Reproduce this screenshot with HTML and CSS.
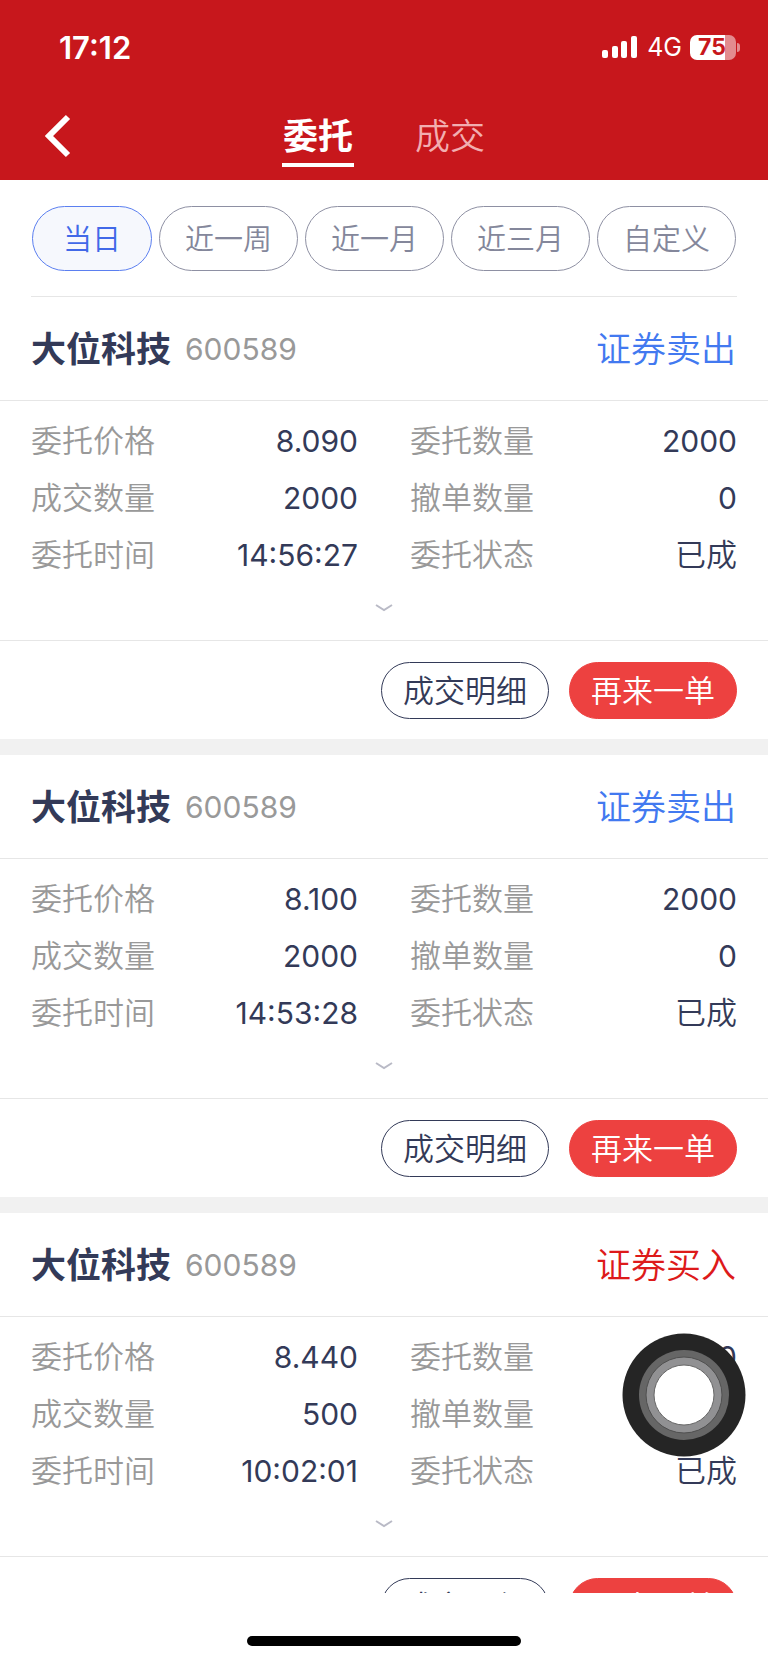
FILE: index.html
```html
<!DOCTYPE html>
<html lang="zh-CN">
<head>
  <meta charset="UTF-8">
  <meta name="viewport" content="width=device-width, initial-scale=1.0">
  <title>委托</title>
  <link rel="stylesheet" href="styles.css">
</head>
<body>
  <header class="header">
    <div class="status-bar">
      <span class="time">17:12</span>
      <div class="status-icons">
        <svg class="signal" width="36" height="22" viewBox="0 0 36 22" fill="#fff">
          <rect x="0" y="14" width="6" height="8" rx="2"/>
          <rect x="10" y="10" width="6" height="12" rx="2"/>
          <rect x="19" y="5" width="6" height="17" rx="2"/>
          <rect x="29" y="0" width="6" height="22" rx="2"/>
        </svg>
        <span class="network">4G</span>
        <div class="battery"><span class="battery-level">75</span></div>
      </div>
    </div>
    <nav class="nav">
      <button class="back" aria-label="返回">
        <svg width="26" height="44" viewBox="0 0 26 44" fill="none" stroke="#fff" stroke-width="6">
          <path d="M23 3 L4 22 L23 41"/>
        </svg>
      </button>
      <div class="tabs">
        <a class="tab active" href="#orders">委托</a>
        <a class="tab" href="#deals">成交</a>
      </div>
    </nav>
  </header>

  <div class="filters">
    <button class="filter active">当日</button>
    <button class="filter">近一周</button>
    <button class="filter">近一月</button>
    <button class="filter">近三月</button>
    <button class="filter">自定义</button>
  </div>

  <main class="orders" id="orders">
    <article class="order">
      <div class="order-head">
        <h2 class="name">大位科技</h2>
        <span class="code">600589</span>
        <span class="side sell">证券卖出</span>
      </div>
      <div class="order-body">
        <dl class="details">
          <div class="item"><dt>委托价格</dt><dd>8.090</dd></div>
          <div class="item"><dt>委托数量</dt><dd>2000</dd></div>
          <div class="item"><dt>成交数量</dt><dd>2000</dd></div>
          <div class="item"><dt>撤单数量</dt><dd>0</dd></div>
          <div class="item"><dt>委托时间</dt><dd>14:56:27</dd></div>
          <div class="item"><dt>委托状态</dt><dd class="state">已成</dd></div>
        </dl>
        <button class="expand" aria-label="展开">
          <svg width="18" height="8" viewBox="0 0 18 8" fill="none" stroke="#b9bac6" stroke-width="2"><path d="M1 1 L9 6 L17 1"/></svg>
        </button>
      </div>
      <div class="order-actions">
        <button class="btn">成交明细</button>
        <button class="btn btn-primary">再来一单</button>
      </div>
    </article>

    <article class="order">
      <div class="order-head">
        <h2 class="name">大位科技</h2>
        <span class="code">600589</span>
        <span class="side sell">证券卖出</span>
      </div>
      <div class="order-body">
        <dl class="details">
          <div class="item"><dt>委托价格</dt><dd>8.100</dd></div>
          <div class="item"><dt>委托数量</dt><dd>2000</dd></div>
          <div class="item"><dt>成交数量</dt><dd>2000</dd></div>
          <div class="item"><dt>撤单数量</dt><dd>0</dd></div>
          <div class="item"><dt>委托时间</dt><dd>14:53:28</dd></div>
          <div class="item"><dt>委托状态</dt><dd class="state">已成</dd></div>
        </dl>
        <button class="expand" aria-label="展开">
          <svg width="18" height="8" viewBox="0 0 18 8" fill="none" stroke="#b9bac6" stroke-width="2"><path d="M1 1 L9 6 L17 1"/></svg>
        </button>
      </div>
      <div class="order-actions">
        <button class="btn">成交明细</button>
        <button class="btn btn-primary">再来一单</button>
      </div>
    </article>

    <article class="order">
      <div class="order-head">
        <h2 class="name">大位科技</h2>
        <span class="code">600589</span>
        <span class="side buy">证券买入</span>
      </div>
      <div class="order-body">
        <dl class="details">
          <div class="item"><dt>委托价格</dt><dd>8.440</dd></div>
          <div class="item"><dt>委托数量</dt><dd>500</dd></div>
          <div class="item"><dt>成交数量</dt><dd>500</dd></div>
          <div class="item"><dt>撤单数量</dt><dd>0</dd></div>
          <div class="item"><dt>委托时间</dt><dd>10:02:01</dd></div>
          <div class="item"><dt>委托状态</dt><dd class="state">已成</dd></div>
        </dl>
        <button class="expand" aria-label="展开">
          <svg width="18" height="8" viewBox="0 0 18 8" fill="none" stroke="#b9bac6" stroke-width="2"><path d="M1 1 L9 6 L17 1"/></svg>
        </button>
      </div>
      <div class="order-actions">
        <button class="btn">成交明细</button>
        <button class="btn btn-primary">再来一单</button>
      </div>
    </article>
  </main>

  <footer class="home-bar">
    <div class="home-indicator"></div>
  </footer>

  <button class="assistive-touch" aria-label="辅助触控">
    <svg width="124" height="124" viewBox="0 0 124 124">
      <circle cx="62" cy="62" r="61.5" fill="#252525"/>
      <circle cx="62" cy="62" r="45" fill="#666"/>
      <circle cx="62" cy="62" r="38" fill="#919193" stroke="#505050" stroke-width="1"/>
      <circle cx="62" cy="62" r="30" fill="#fff" stroke="#666" stroke-width="1"/>
    </svg>
  </button>
</body>
</html>
```
FILE: styles.css
```css
* {
  box-sizing: border-box;
}
body {
  margin: 0;
  height: 100vh;
  display: flex;
  flex-direction: column;
  background: #fff;
  color: #333a58;
  font-family: Inter, "Noto Sans CJK SC", sans-serif;
  font-size: 31px;
}
button {
  margin: 0;
  padding: 0;
  border: none;
  background: none;
  color: inherit;
  font: inherit;
  cursor: pointer;
}
svg {
  display: block;
}

/* header */
.header {
  flex: none;
  background: #c7171c;
  color: #fff;
}
.status-bar {
  height: 94px;
  padding: 0 30px 0 59px;
  display: flex;
  align-items: center;
  justify-content: space-between;
}
.time {
  font-size: 31px;
  font-weight: 600;
}
.status-icons {
  display: flex;
  align-items: center;
}
.network {
  margin: 0 8px 0 9px;
  font-size: 25px;
}
.battery {
  position: relative;
  width: 46px;
  height: 25px;
  margin-right: 2px;
  padding-right: 2px;
  display: flex;
  align-items: center;
  justify-content: center;
  border-radius: 7px;
  background: linear-gradient(to right, #fff 35px, #e38b8e 35px);
}
.battery::after {
  content: "";
  position: absolute;
  top: 8px;
  right: -4px;
  width: 3px;
  height: 9px;
  border-radius: 0 3px 3px 0;
  background: #e38b8e;
}
.battery-level {
  color: #c7171c;
  font-size: 23px;
  font-weight: 700;
  line-height: 25px;
}
.nav {
  height: 86px;
  padding: 0 45px;
  display: grid;
  grid-template-columns: 1fr auto 1fr;
}
.back {
  justify-self: start;
  align-self: center;
  padding-bottom: 3px;
}
.tabs {
  display: flex;
  gap: 60px;
}
.tab {
  height: 73px;
  padding: 0 1px;
  border-bottom: 4px solid transparent;
  color: #f2aeb0;
  font-size: 35px;
  font-weight: 350;
  line-height: 84px;
  text-decoration: none;
}
.tab.active {
  border-color: #fff;
  color: #fff;
  font-weight: 600;
}

/* date filters */
.filters {
  flex: none;
  display: flex;
  justify-content: space-between;
  margin: 0 31px;
  padding: 26px 1px 25px;
  border-bottom: 1px solid #e6e6e6;
}
.filter {
  min-width: 120px;
  height: 65px;
  padding: 0 25px 4px;
  border: 1px solid #8e90a3;
  border-radius: 33px;
  color: #84879b;
  font-size: 29px;
  font-weight: 350;
}
.filter.active {
  border-color: #5b7ff0;
  background: #f6f8fd;
  color: #4169e8;
}

/* orders */
.orders {
  flex: 1;
  min-height: 0;
  overflow: hidden;
}
.order {
  border-bottom: 16px solid #f1f1f1;
}
.order-head {
  height: 104px;
  padding: 0 32px 0 31px;
  display: flex;
  align-items: center;
  border-bottom: 1px solid #e6e6e6;
}
.name {
  margin: 0 14px 0 0;
  padding-bottom: 4px;
  font-size: 35px;
  font-weight: 600;
}
.code {
  color: #999;
  font-size: 30px;
}
.side {
  margin-left: auto;
  padding-bottom: 4px;
  font-size: 35px;
  font-weight: 350;
}
.sell {
  color: #4279f0;
}
.buy {
  color: #dd1a1a;
}
.order-body {
  padding: 11px 31px 7px;
  border-bottom: 1px solid #e6e6e6;
}
.details {
  margin: 0;
  display: grid;
  grid-template-columns: 1fr 1fr;
  column-gap: 52px;
}
.item {
  height: 57px;
  display: flex;
  align-items: center;
  justify-content: space-between;
}
.item dt {
  padding-bottom: 4px;
  color: #999;
  font-weight: 350;
}
.item dd {
  margin: 0;
  font-size: 30px;
}
.item .state {
  padding-bottom: 4px;
  font-size: 31px;
  font-weight: 350;
}
.expand {
  width: 100%;
  height: 50px;
  display: flex;
  align-items: center;
  justify-content: center;
}
.order-actions {
  padding: 21px 31px 20px;
  display: flex;
  justify-content: flex-end;
  gap: 20px;
}
.btn {
  height: 57px;
  padding: 0 21px 4px;
  border: 1px solid #333a58;
  border-radius: 29px;
  font-weight: 350;
}
.btn-primary {
  border-color: #ed4140;
  background: #ed4140;
  color: #fff;
}

/* bottom */
.home-bar {
  flex: none;
  height: 70px;
  padding-top: 43px;
  background: #fff;
}
.home-indicator {
  width: 274px;
  height: 10px;
  margin: 0 auto;
  border-radius: 5px;
  background: #000;
}
.assistive-touch {
  position: fixed;
  right: 22px;
  bottom: 206px;
  border-radius: 50%;
}
```
